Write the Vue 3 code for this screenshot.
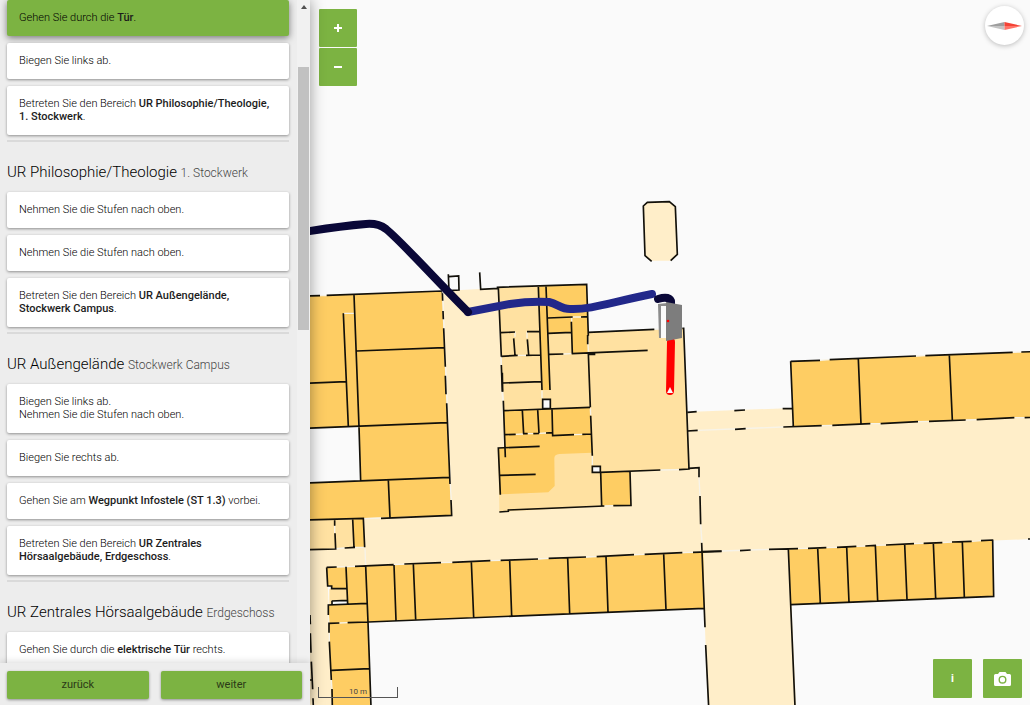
<script setup>
const sections = [
  {
    steps: [
      { active: true, lines: [[{ t: 'Gehen Sie durch die ' }, { t: 'Tür', b: true }, { t: '.' }]] },
      { lines: [[{ t: 'Biegen Sie links ab.' }]] },
      { lines: [[{ t: 'Betreten Sie den Bereich ' }, { t: 'UR Philosophie/Theologie, 1. Stockwerk', b: true }, { t: '.' }]] },
    ],
  },
  {
    title: 'UR Philosophie/Theologie',
    floor: '1. Stockwerk',
    steps: [
      { lines: [[{ t: 'Nehmen Sie die Stufen nach oben.' }]] },
      { lines: [[{ t: 'Nehmen Sie die Stufen nach oben.' }]] },
      { lines: [[{ t: 'Betreten Sie den Bereich ' }, { t: 'UR Außengelände, Stockwerk Campus', b: true }, { t: '.' }]] },
    ],
  },
  {
    title: 'UR Außengelände',
    floor: 'Stockwerk Campus',
    steps: [
      { lines: [[{ t: 'Biegen Sie links ab.' }], [{ t: 'Nehmen Sie die Stufen nach oben.' }]] },
      { lines: [[{ t: 'Biegen Sie rechts ab.' }]] },
      { lines: [[{ t: 'Gehen Sie am ' }, { t: 'Wegpunkt Infostele (ST 1.3)', b: true }, { t: ' vorbei.' }]] },
      { lines: [[{ t: 'Betreten Sie den Bereich ' }, { t: 'UR Zentrales Hörsaalgebäude, Erdgeschoss', b: true }, { t: '.' }]] },
    ],
  },
  {
    title: 'UR Zentrales Hörsaalgebäude',
    floor: 'Erdgeschoss',
    steps: [
      { lines: [[{ t: 'Gehen Sie durch die ' }, { t: 'elektrische Tür', b: true }, { t: ' rechts.' }]] },
    ],
  },
]

// Each block of the plan is drawn on its own grid, three units per map pixel.
const blocks = [
  {
    name: 'west',
    at: 'translate(300 280) scale(.33333)',
    room: 'M20 48L427 33L455 706L30 719V608L182 602L176 440L20 445Z',
    gap: 'M60 47H80M132 100H163M427 33L455 706M190 716L243 714',
    wall: 'M20 48L60 47M80 46L427 33M162 44L177 440L182 603M130 100L145 440M20 310L138 305M170 213L433 203M20 445L442 428M20 609L448 592M265 601L270 713M427 35L428 62M429 93L430 118M431 145L436 260M436 287L438 343M440 370L450 612M453 660L455 706L243 715',
  },
  {
    name: 'south',
    at: 'translate(300 500) scale(.33333)',
    light: 'M20 60L158 56L162 142L20 149ZM90 266H141V303H90Z',
    room: 'M158 56L190 55L194 142L162 143ZM80 202L138 200L202 198L902 170L1210 157L1213 325L205 366L213 620H97L85 315L143 312L141 266H95V258H83Z',
    cover: 'M88 267H140V302H96V312H88Z',
    gap: 'M104 77V100M108 146L134 144M165 142H194M195 145L197 197M110 201L165 199M281 194L313 192M423 188L457 187M571 182L602 181M714 177L746 175M858 171L890 170M1002 164L1034 163M1147 158L1179 157M85 345L87 370M88 398V425M94 540L96 567M118 369L143 368',
    wall: 'M20 60L190 55L194 142M104 60V77M105 100L107 147L20 149M134 144L165 142M158 57L162 142M80 202L110 201M80 202L83 258H95V266H141M138 200L143 312M95 303L141 301M96 303V313M85 345V315L202 310M87 398V370L118 369M143 368L205 366M88 425L94 540M96 567L97 620M95 511L208 506M197 198L204 366L213 620M165 199L281 194M313 192L423 188M457 187L571 182M602 181L714 177M746 175L858 171M890 170L1002 164M1034 163L1147 158M1179 157L1265 154M282 195L288 361M340 192L347 358M514 185L521 352M629 180L635 347M803 174L809 341M918 169L924 336M1091 161L1098 329M205 366L1213 325M1205 128L1215 382M1217 435L1226 620M30 345L31 373M31 400L33 458M34 485L38 568M39 595L40 620M30 540H38',
  },
  {
    name: 'north',
    at: 'translate(430 190) scale(.33333)',
    corridor: 'M640 48L652 37L718 35L736 50L742 193L722 212H665L645 197Z',
    light: 'M205 293L470 283L474 427L760 415L777 837L512 847L515 948L208 966L205 774L223 773Z',
    room: 'M325 290L348 289L360 600H336ZM348 289L470 283L475 490L427 491L424 427L354 430Z',
    gap: 'M37 303L40 310M214 500V525M217 605L218 632M473 440L475 485M428 381H453M425 383V395M400 492L425 491M336 602V625M673 418L757 415M255 426V440M291 425V445M263 496H288',
    wall: 'M665 214L645 197L640 48L652 37L718 35L736 50L742 193L722 212M55 253L57 302L87 300L86 258L57 260M149 247L152 298L205 295M200 292L470 283L475 437M205 293L214 500M214 525L217 605M325 290L336 600M348 289L360 600M212 428L255 426M291 425L328 424M251 445L255 495M292 448L296 495M214 499L263 496M288 496L331 495M218 579L333 575M353 384L428 381M453 381L472 380M354 430L424 427M424 395L427 491M357 493L400 492M425 491L653 481M475 427L673 418M757 415H761L777 837M473 435V463M475 490L481 652M475 493H496',
  },
  {
    name: 'centre',
    at: 'translate(430 370) scale(.33333)',
    room: 'M222 122L480 112L485 248L388 252Q373 253 373 265L374 348L355 367L208 373L205 234L225 233ZM512 307L600 305L603 406L515 408Z',
    shaft: 'M338 88H361V116H338ZM487 289H511V307H487Z',
    gap: 'M218 65L220 92M257 193L279 192M293 191H310M327 190L348 189M432 194L457 193M481 115L482 135M487 257V285M523 408L550 407M691 300L747 299M807 322L810 378M812 463L816 518',
    wall: 'M217 8L218 65M220 92L226 262M222 122L480 112M277 121L281 192M323 118L327 190M366 116L368 197L432 194M225 194L257 193M279 191H293M310 191L327 190M348 189L367 188M457 193L484 192M482 137L487 257M329 229L205 234L211 374M209 316L317 313M208 426L235 424V420L523 408M550 407L603 406L600 305M512 307L515 408M510 307L691 300M747 299L777 297V295L807 293V322M810 378L812 463M338 88H361V116H338ZM487 289H511V307H487Z',
  },
  {
    name: 'east',
    at: 'translate(680 340) scale(.33333)',
    room: 'M332 64L1060 35V232L340 260ZM325 628L938 600L941 769L333 794Z',
    gap: 'M420 61L449 59M708 48L736 47M998 37L1024 36M53 271L310 261M425 257L457 256M571 251H602M714 245L747 244M857 240L890 239M1003 233H1034M125 633L267 628M354 626L384 625M439 623L471 622M529 619L556 618M588 616L618 615M702 611L731 610M787 608L816 606M875 604L903 602',
    wall: 'M332 64L420 61M449 59L708 48M736 47L998 37M1024 36L1060 35M332 64L340 260M535 58L543 251M808 46L817 240M22 217L50 215M163 212L195 210M308 206L338 205M22 273L53 271M165 268L197 266M310 261L425 257M457 256L571 251M602 251L714 245M747 244L857 240M890 239L1003 233M1034 233L1060 232M63 635L125 633M180 632L212 630M267 628L354 626M384 625L439 623M471 622L529 619M556 618L588 616M618 615L702 611M731 610L787 608M816 606L875 604M903 602L940 600M1044 597H1060M325 628L345 1100M938 600L941 769L333 794M413 624L421 790M500 620L507 787M586 616L593 782M674 613L681 778M760 609L767 775M847 605L853 771',
  },
]
</script>

<template>
  <div class="app">
    <aside class="sidebar">
      <div class="scroller">
        <div class="list">
          <section v-for="(s, i) in sections" :key="i" class="section">
            <h2 v-if="s.title">{{ s.title }} <small>{{ s.floor }}</small></h2>
            <article v-for="(step, j) in s.steps" :key="j" class="card" :class="{ active: step.active }">
              <p v-for="(line, k) in step.lines" :key="k"><template v-for="(p, m) in line" :key="m"><strong v-if="p.b">{{ p.t }}</strong><template v-else>{{ p.t }}</template></template></p>
            </article>
          </section>
        </div>
        <div class="track">
          <svg class="arrow" viewBox="0 0 6 4"><path d="M0 4L3 0L6 4Z" /></svg>
          <div class="thumb"></div>
        </div>
      </div>
      <nav class="actions">
        <button type="button">zurück</button>
        <button type="button">weiter</button>
      </nav>
    </aside>

    <main class="map">
      <svg class="plan" viewBox="310 0 720 705" preserveAspectRatio="xMinYMin slice" role="img" aria-label="Lageplan">
        <path class="corridor" d="M443 291L498 288L505 480L600 460L688 460L687 412L793 408V427L1032 417V539L789 549L796 706H708L702 552L327 567L333 706H310V519L452 515Z" />
        <g v-for="b in blocks" :key="b.name" :transform="b.at">
          <path v-if="b.corridor" class="corridor" :d="b.corridor" />
          <path v-if="b.light" class="light" :d="b.light" />
          <path class="room" :d="b.room" />
          <path v-if="b.cover" class="light" :d="b.cover" />
          <path v-if="b.shaft" class="shaft" :d="b.shaft" />
          <path class="gap" :d="b.gap" />
          <path class="wall" :d="b.wall" />
        </g>
        <path class="route blue" d="M468 312L510 304Q530 301 549 302C558 304 561 309 570 309C590 310 612 302 652 294" />
        <path class="route dark" d="M304 232Q340 226 366 224Q378 223 386 229C402 242 430 274 468 312" />
        <path class="route dark" d="M658 299Q669 296 671 301V306" />
        <path class="route red" d="M671 342L670 391" />
        <path class="marker" d="M670 387L673 393H667Z" />
        <path class="doorway" d="M661 305H667V338H661Z" />
        <path class="frame" d="M658 304L667 303V306H661V338H659Z" />
        <path class="door" d="M666 302L682 305V338L666 341Z" />
        <circle class="knob" cx="668" cy="321" r="1.3" />
      </svg>

      <div class="zoom">
        <button type="button" aria-label="Vergrößern"><svg viewBox="0 0 8 8"><path d="M4 0V8M0 4H8" /></svg></button>
        <button type="button" aria-label="Verkleinern"><svg viewBox="0 0 8 8"><path d="M0 4H8" /></svg></button>
      </div>

      <button type="button" class="compass" aria-label="Norden">
        <svg viewBox="0 0 36 10"><path fill="#9e9e9e" d="M0 5L18 1V5Z" /><path fill="#c4c4c4" d="M0 5H18V9Z" /><path fill="#f44336" d="M18 1L36 5H18Z" /><path fill="#ff7468" d="M18 5H36L18 9Z" /></svg>
      </button>

      <div class="scale">10 m</div>

      <div class="tools">
        <button type="button">i</button>
        <button type="button" aria-label="Foto">
          <svg viewBox="0 0 17 14"><path fill="#fff" fill-rule="evenodd" d="M5.5 0H11.5L13 2H15.5Q17 2 17 3.5V12.5Q17 14 15.5 14H1.5Q0 14 0 12.5V3.5Q0 2 1.5 2H4ZM8.5 3.7A4 4 0 1 0 8.5 11.7A4 4 0 1 0 8.5 3.7ZM8.5 5.1A2.6 2.6 0 1 1 8.5 10.3A2.6 2.6 0 1 1 8.5 5.1Z" /></svg>
        </button>
      </div>
    </main>
  </div>
</template>

<style>
body {
  margin: 0;
}
</style>

<style scoped>
.app {
  display: flex;
  height: 100vh;
  overflow: hidden;
  font-family: Roboto, "Liberation Sans", sans-serif;
  font-size: 11px;
  line-height: 13px;
  color: #000;
  background: #fafafa;
}
button {
  border: 0;
  padding: 0;
  font: inherit;
  color: #fff;
  background: #7cb342;
  border-radius: 1px;
  display: flex;
  align-items: center;
  justify-content: center;
}
.sidebar {
  width: 310px;
  flex: none;
  display: flex;
  flex-direction: column;
  background: #ededed;
  box-shadow: 0 0 14px rgba(0, 0, 0, 0.4);
  z-index: 1;
}
.scroller {
  flex: 1;
  min-height: 0;
  display: flex;
  overflow: hidden;
}
.list {
  flex: 1;
  padding: 0 8px 0 7px;
}
.section {
  display: flex;
  flex-direction: column;
  gap: 7px;
}
.section + .section {
  margin-top: 5px;
  border-top: 2px solid #dadada;
}
h2 {
  margin: 20px 0 2px;
  font-size: 15px;
  line-height: 20px;
  font-weight: 300;
  color: #000;
}
h2 small {
  font-size: 12px;
  color: #444;
}
.card {
  padding: 11px 12px 12px;
  background: #fff;
  border-radius: 2px;
  box-shadow: 0 1px 3px rgba(0, 0, 0, 0.4);
  font-weight: 300;
}
.card.active {
  background: #7cb342;
  color: #000;
  box-shadow: 0 2px 7px rgba(0, 0, 0, 0.5);
}
.card p {
  margin: 0;
}
.card strong {
  font-weight: 500;
  color: #1c1c1c;
}
.track {
  width: 13px;
  box-sizing: border-box;
  padding: 5px 1px 0;
  background: #f1f1f1;
}
.arrow {
  display: block;
  width: 6px;
  height: 4px;
  margin: 0 auto;
  fill: #505050;
}
.thumb {
  height: 40%;
  margin-top: 58px;
  background: #c1c1c1;
}
.actions {
  display: flex;
  gap: 12px;
  padding: 8px 8px 6px 7px;
  background: #ededed;
  box-shadow: 0 -2px 6px rgba(0, 0, 0, 0.12);
}
.actions button {
  flex: 1;
  height: 28px;
  padding-bottom: 2px;
  box-sizing: border-box;
  color: #2b3a17;
  border-radius: 2px;
  box-shadow: 0 1px 3px rgba(0, 0, 0, 0.4);
}
.map {
  flex: 1;
  position: relative;
  overflow: hidden;
}
.plan {
  display: block;
  width: 100%;
  height: 100%;
}
.corridor { fill: #ffeec9; }
.light { fill: #ffe1a1; }
.room { fill: #fecd63; }
.shaft { fill: #fafafa; }
.gap {
  fill: none;
  stroke: #f7f3e8;
  stroke-width: 4;
}
.wall {
  fill: none;
  stroke: #12100a;
  stroke-width: 5;
}
.route {
  fill: none;
  stroke-width: 8;
  stroke-linecap: round;
  stroke-linejoin: round;
}
.blue { stroke: #22288a; }
.dark { stroke: #0a0838; }
.red {
  stroke: #f00;
}
.marker, .doorway { fill: #fafafa; }
.door { fill: #7d7d7d; }
.frame { fill: #8c8c8c; }
.knob { fill: #f00; }
.zoom {
  position: absolute;
  left: 9px;
  top: 9px;
  display: flex;
  flex-direction: column;
  gap: 1px;
}
.zoom button {
  width: 38px;
  height: 38px;
}
.tools button {
  width: 39px;
  height: 39px;
  font-weight: 700;
}
.zoom svg {
  width: 8px;
  height: 8px;
  stroke: #fff;
  stroke-width: 2;
}
.compass {
  position: absolute;
  right: 6px;
  top: 6px;
  width: 39px;
  height: 39px;
  border-radius: 50%;
  background: #fff;
  box-shadow: 0 1px 5px rgba(0, 0, 0, 0.25);
}
.compass svg {
  width: 35px;
  height: 10px;
}
.scale {
  position: absolute;
  left: 8px;
  bottom: 7px;
  width: 78px;
  height: 10px;
  border: 1px solid #555;
  border-top: 0;
  font-size: 8px;
  line-height: 9px;
  text-align: center;
  color: #444;
}
.tools {
  position: absolute;
  right: 8px;
  bottom: 7px;
  display: flex;
  gap: 11px;
}
.tools svg {
  width: 17px;
  height: 14px;
}
</style>
